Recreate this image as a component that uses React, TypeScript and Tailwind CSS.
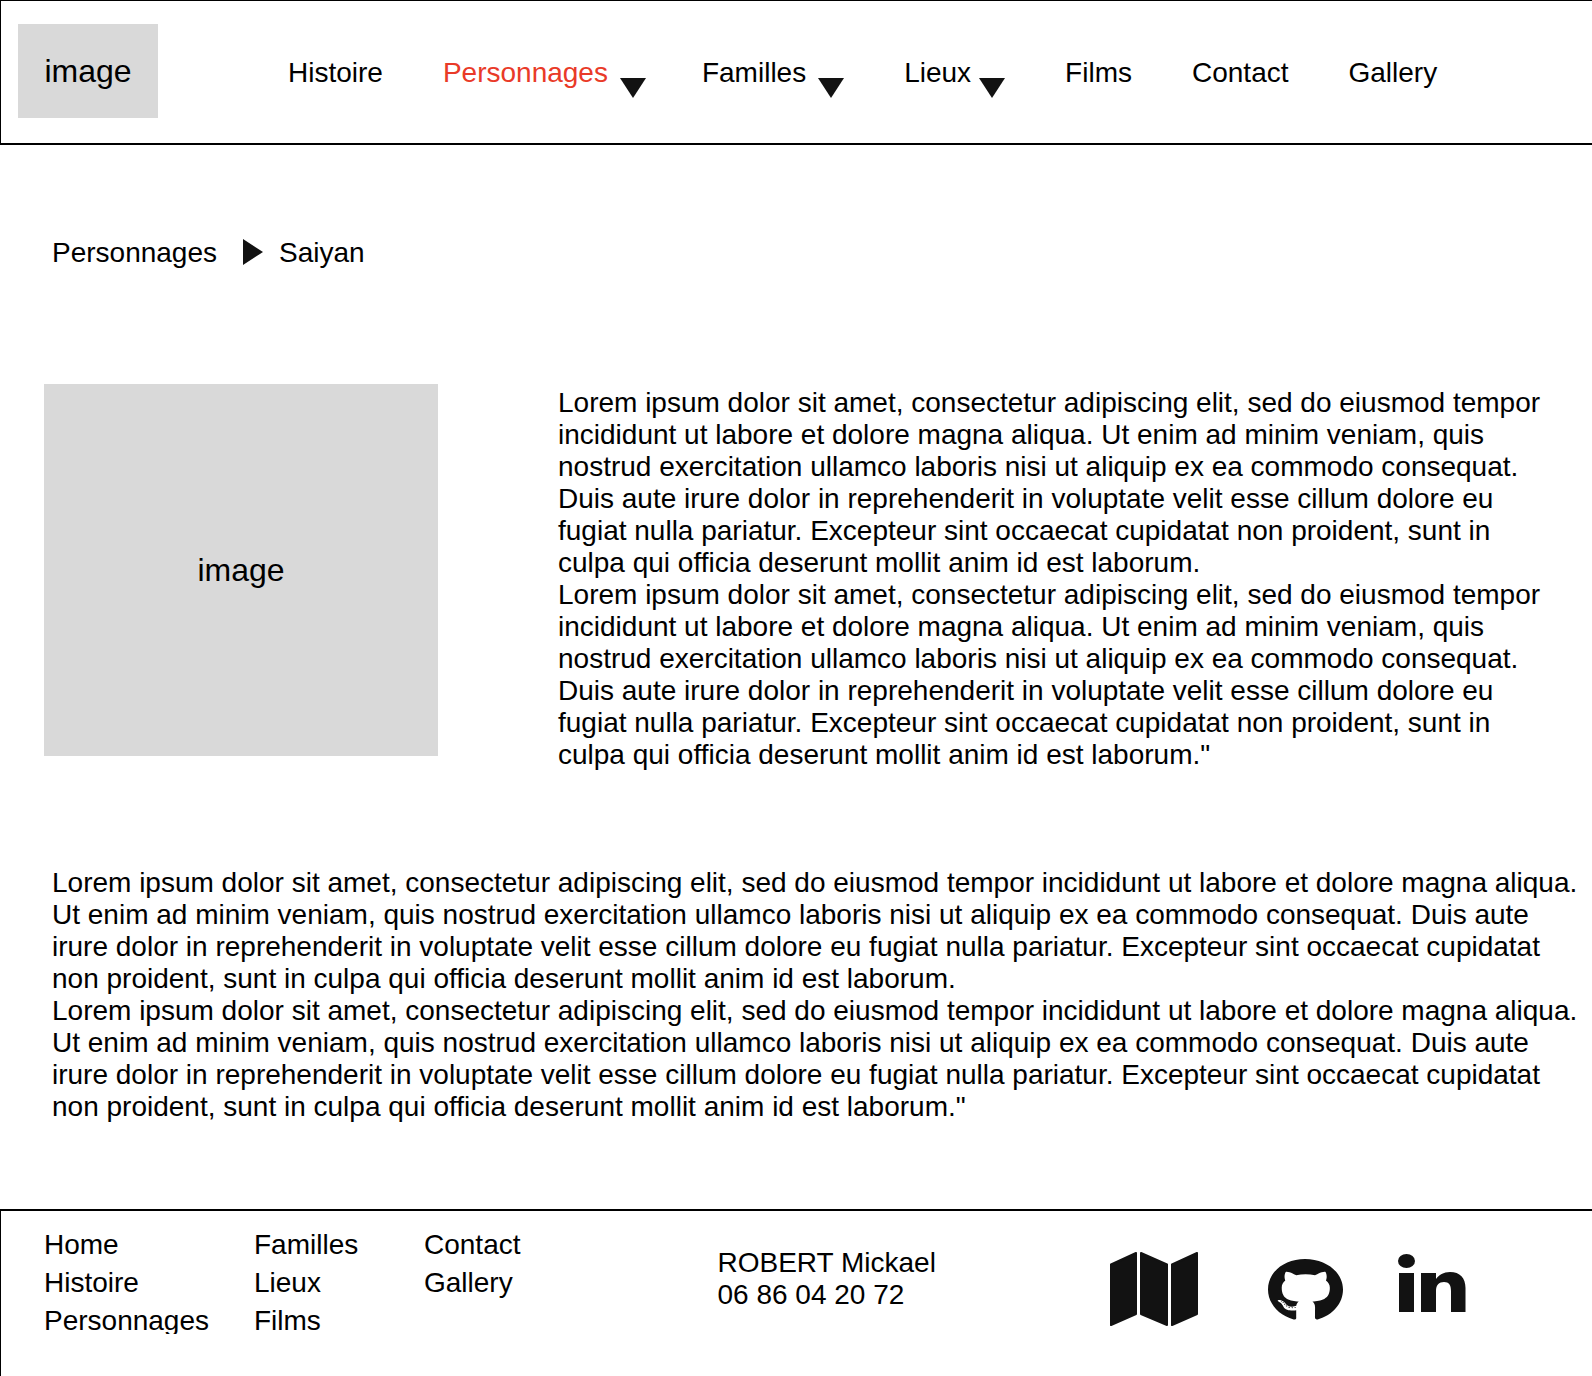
import React from "react";
import { FaGithub } from "react-icons/fa";

type NavItem = {
  label: string;
  className?: string;
  arrow?: string;
};

const navItems: NavItem[] = [
  { label: "Histoire" },
  { label: "Personnages", className: "text-[#e93a28]", arrow: "ml-3 -mr-1" },
  { label: "Familles", arrow: "ml-3" },
  { label: "Lieux", arrow: "ml-2" },
  { label: "Films" },
  { label: "Contact" },
  { label: "Gallery" },
];

const footerColumns = [
  ["Home", "Histoire", "Personnages"],
  ["Familles", "Lieux", "Films"],
  ["Contact", "Gallery"],
];

const lorem =
  "Lorem ipsum dolor sit amet, consectetur adipiscing elit, sed do eiusmod tempor incididunt ut labore et dolore magna aliqua. Ut enim ad minim veniam, quis nostrud exercitation ullamco laboris nisi ut aliquip ex ea commodo consequat. Duis aute irure dolor in reprehenderit in voluptate velit esse cillum dolore eu fugiat nulla pariatur. Excepteur sint occaecat cupidatat non proident, sunt in culpa qui officia deserunt mollit anim id est laborum.";

function Placeholder({ className }: { className: string }) {
  return (
    <div
      className={`flex shrink-0 items-center justify-center bg-[#d9d9d9] text-[32px] leading-9 ${className}`}
    >
      image
    </div>
  );
}

function Header() {
  return (
    <header className="flex items-start border-t border-b-2 border-l border-black pt-[23px] pb-[25px] pl-[17px]">
      <Placeholder className="h-[94px] w-[140px]" />
      <nav aria-label="Navigation principale" className="mt-[33px] ml-[130px]">
        <ul className="flex gap-[60px]">
          {navItems.map((item) => (
            <li key={item.label} className="flex">
              <a href="#" className={item.className}>
                {item.label}
              </a>
              {item.arrow && (
                <button
                  type="button"
                  aria-label={`Ouvrir ${item.label}`}
                  className={`mt-[21px] h-5 w-[26px] ${item.arrow}`}
                >
                  <svg viewBox="0 0 26 20" className="h-5 w-[26px]" fill="#121212" aria-hidden="true">
                    <path d="M0 0H26L13 20Z" />
                  </svg>
                </button>
              )}
            </li>
          ))}
        </ul>
      </nav>
    </header>
  );
}

function Footer() {
  return (
    <footer className="flex grow items-start border-t-2 border-l border-black pl-[43px]">
      <nav
        aria-label="Pied de page"
        className="mt-[15px] grid h-[108px] grid-cols-[210px_170px_auto] overflow-hidden"
      >
        {footerColumns.map((column) => (
          <ul key={column[0]}>
            {column.map((label) => (
              <li key={label} className="leading-[38px]">
                <a href="#">{label}</a>
              </li>
            ))}
          </ul>
        ))}
      </nav>
      <address className="ml-[197px] pt-9 whitespace-nowrap not-italic">
        ROBERT Mickael
        <br />
        06 86 04 20 72
      </address>
      <div className="ml-[174px] flex items-start pt-[41px] text-[#121212]">
        <a href="#" aria-label="Plan du site">
          <svg viewBox="0 0 88 74" className="h-[74px] w-[88px]" fill="currentColor" stroke="currentColor" strokeLinejoin="round" strokeWidth="2" aria-hidden="true">
            <path d="M1 12.500L26 1V62L1 73Z" />
            <path d="M31 1L57 12.500V73L31 62Z" />
            <path d="M62 12.500L87 1V62L62 73Z" />
          </svg>
        </a>
        <a href="#" aria-label="GitHub" className="mt-1.5 ml-[70px]">
          <FaGithub preserveAspectRatio="none" className="h-16 w-[75px]" aria-hidden="true" />
        </a>
        <a href="#" aria-label="LinkedIn" className="mt-0.5 ml-[55px]">
          <svg viewBox="0 0 68 58" className="h-[58px] w-[68px]" fill="currentColor" aria-hidden="true">
            <ellipse cx="8.500" cy="7" rx="8.500" ry="7" />
            <path d="M1 19H16V58H1Z" />
            <path d="M23 19H38V25C41 21 45.500 18 52 18C62 18 67.500 24 67.500 34V58H53V37C53 31 51 28 46 28C41 28 38 31 38 37V58H23Z" />
          </svg>
        </a>
      </div>
    </footer>
  );
}

export default function App() {
  return (
    <div className="flex min-h-screen flex-col bg-white font-['Liberation_Sans',Arial,sans-serif] text-[28px] leading-8 text-black">
      <Header />
      <main className="pb-[86px]">
        <nav aria-label="Fil d’Ariane" className="mt-[92px] ml-[52px]">
          <ol className="flex items-start">
            <li>
              <a href="#">Personnages</a>
            </li>
            <li aria-hidden="true" className="mt-0.5 ml-[26px]">
              <svg viewBox="0 0 20 26" className="h-[26px] w-5" fill="#121212">
                <path d="M0 0L20 13L0 26Z" />
              </svg>
            </li>
            <li className="ml-4">
              <a href="#" aria-current="page">
                Saiyan
              </a>
            </li>
          </ol>
        </nav>
        <section className="mt-[115px] flex items-start pr-10 pl-11">
          <Placeholder className="h-[372px] w-[394px]" />
          <div className="mt-[3px] ml-[120px]">
            <p>{lorem}</p>
            <p>{`${lorem}"`}</p>
          </div>
        </section>
        <section className="mt-24 pr-3 pl-[52px]">
          <p>{lorem}</p>
          <p>{`${lorem}"`}</p>
        </section>
      </main>
      <Footer />
    </div>
  );
}
